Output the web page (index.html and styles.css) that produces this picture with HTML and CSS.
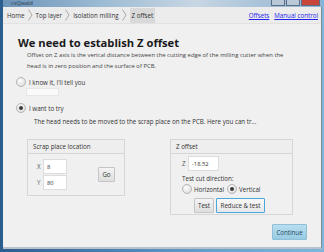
FILE: index.html
```html
<!DOCTYPE html>
<html>
  <head>
    <title>cxQwald</title>
    <link rel="stylesheet" href="styles.css">
  </head>
  <body>
    <div class="frame">
      <div class="titlebar">
        <span class="app-title">cxQwald</span>
        <div class="win-btns">
          <span class="win-btn"></span>
          <span class="win-btn"></span>
          <span class="win-btn close"></span>
        </div>
      </div>

      <div class="client">
        <div class="crumbbar">
          <span class="crumb">Home</span>
          <svg class="chev" width="5" height="12" viewBox="0 0 5 12"><path d="M0.5 0.5 L4 6 L0.5 11.5" fill="none" stroke="#9a9a9a" stroke-width="0.8"/></svg>
          <span class="crumb">Top layer</span>
          <svg class="chev" width="5" height="12" viewBox="0 0 5 12"><path d="M0.5 0.5 L4 6 L0.5 11.5" fill="none" stroke="#9a9a9a" stroke-width="0.8"/></svg>
          <span class="crumb">Isolation milling</span>
          <svg class="chev" width="5" height="12" viewBox="0 0 5 12"><path d="M0.5 0.5 L4 6 L0.5 11.5" fill="none" stroke="#9a9a9a" stroke-width="0.8"/></svg>
          <span class="crumb current">Z offset</span>

          <div class="toplinks">
            <a href="#">Offsets</a>
            <a href="#">Manual control</a>
          </div>
        </div>

        <div class="content">
          <h1>We need to establish Z offset</h1>
          <p class="desc">
            Offset on Z axis is the verical distance between the cutting edge of the milling cutter when the<br>
            head is in zero position and the surface of PCB.
          </p>

          <label class="radio know">
            <span class="dot"></span>
            I know it, I'll tell you
          </label>
          <input class="known-field" type="text">

          <label class="radio try">
            <span class="dot checked"></span>
            I want to try
          </label>
          <p class="try-desc">The head needs to be moved to the scrap place on the PCB. Here you can tr...</p>

          <div class="panels">
            <div class="panel scrap">
              <div class="panel-head">Scrap place location</div>
              <div class="panel-body scrap-body">
                <div class="coords">
                  <div class="coord-row">
                    <span class="axis">X</span>
                    <input class="field" type="text" value="8">
                  </div>
                  <div class="coord-row">
                    <span class="axis">Y</span>
                    <input class="field" type="text" value="80">
                  </div>
                </div>
                <button class="btn go">Go</button>
              </div>
            </div>

            <div class="panel zpanel">
              <div class="panel-head">Z offset</div>
              <div class="panel-body">
                <div class="coord-row">
                  <span class="axis">Z</span>
                  <input class="field zfield" type="text" value="-18.52">
                </div>
                <div class="dir-label">Test cut direction:</div>
                <div class="dir-row">
                  <label class="radio small"><span class="dot"></span>Horizontal</label>
                  <label class="radio small"><span class="dot checked"></span>Vertical</label>
                </div>
                <div class="test-btns">
                  <button class="btn">Test</button>
                  <button class="btn focused">Reduce &amp; test</button>
                </div>
              </div>
            </div>
          </div>

          <div class="footer">
            <button class="btn continue">Continue</button>
          </div>
        </div>
      </div>
    </div>
  </body>
</html>
```

FILE: styles.css
```css
body {
  margin: 0;
  padding: 0;
  font-family: "Open Sans", "DejaVu Sans", sans-serif;
  color: #333;
}

.frame {
  width: 324px;
  height: 252px;
  box-sizing: border-box;
  padding: 0 2px 3px 3px;
  display: flex;
  flex-direction: column;
  background: linear-gradient(90deg, #2c5d8f 0%, #4f86b8 40%, #6aa4cf 70%, #7fb6dd 100%);
  overflow: hidden;
}

.titlebar {
  height: 7px;
  position: relative;
  background: linear-gradient(90deg, #6b93b8, #9bbad3 30%, #c7d6e3 60%, #8fb2d0);
}

.app-title {
  position: absolute;
  left: 8px;
  top: 0;
  font-size: 5.5px;
  line-height: 6px;
  color: #2a3a4a;
}

.win-btns {
  position: absolute;
  right: 2px;
  top: 0;
  display: flex;
  gap: 1px;
}

.win-btn {
  width: 12px;
  height: 5px;
  background: #b9c7d6;
  border: 1px solid #5a6f87;
  border-top: none;
}

.win-btn.close {
  width: 17px;
  background: #c8453a;
}

.client {
  flex: 1;
  display: flex;
  flex-direction: column;
  background-color: #f0f0f0;
  border-right: 1px solid #7e8a96;
  border-bottom: 2px solid #b9c2cc;
}

.crumbbar {
  height: 16px;
  display: flex;
  align-items: center;
  padding: 0 3px 0 3px;
  background-color: #ececec;
  border-bottom: 1px solid #e2e2e2;
  font-size: 6.2px;
}

.crumb {
  padding: 2px 1px;
  color: #333;
}

.crumb.current {
  background-color: #d9d9d9;
  padding: 3px 2px 3px 2px;
  margin-left: 1px;
}

.chev {
  margin: 0 2px;
}

.toplinks {
  margin-left: auto;
  display: flex;
  gap: 5px;
}

.toplinks a {
  color: #2222ee;
  text-decoration: underline;
}

.content {
  flex: 1;
  display: flex;
  flex-direction: column;
  align-items: flex-start;
  padding: 0 0 0 13px;
}

h1 {
  margin: 12px 0 0 2px;
  font-size: 11.2px;
  line-height: 14px;
  font-weight: 700;
  color: #1a1a1a;
}

.desc {
  margin: 0 0 0 11px;
  width: 290px;
  font-size: 5.9px;
  line-height: 11px;
  color: #444;
}

.radio {
  display: flex;
  align-items: center;
  gap: 3px;
  font-size: 6.2px;
  color: #333;
}

.radio.know {
  margin-top: 5px;
}

.dot {
  width: 8px;
  height: 8px;
  border-radius: 50%;
  border: 1px solid #b5b5b5;
  background: radial-gradient(circle at 40% 35%, #fdfdfd, #d6d6d6);
  display: flex;
  align-items: center;
  justify-content: center;
}

.dot.checked::after {
  content: "";
  width: 4px;
  height: 4px;
  border-radius: 50%;
  background-color: #3a3a3a;
}

.known-field {
  margin: 1px 0 0 10px;
  width: 33px;
  height: 8px;
  box-sizing: border-box;
  border: 1px solid #e6e6e6;
  background-color: #fafafa;
  padding: 0;
}

.radio.try {
  margin-top: 7px;
}

.try-desc {
  margin: 4px 0 0 18px;
  font-size: 6.2px;
  color: #333;
}

.panels {
  display: flex;
  align-items: flex-start;
  margin: 13px 0 0 11px;
}

.panel {
  border: 1px solid #d6d6d6;
  background-color: #f0f0f0;
}

.panel-head {
  height: 13px;
  display: flex;
  align-items: center;
  padding-left: 5px;
  font-size: 6.2px;
  color: #333;
  border-bottom: 1px solid #d6d6d6;
  background-color: #eeeeee;
}

.scrap {
  width: 96px;
}

.scrap-body {
  display: flex;
  align-items: center;
  padding: 5px 0 5px 9px;
}

.coords {
  display: flex;
  flex-direction: column;
  gap: 1px;
}

.coord-row {
  display: flex;
  align-items: center;
  gap: 2px;
}

.axis {
  font-size: 6.2px;
  color: #555;
  width: 4px;
}

.field {
  width: 24px;
  height: 15px;
  box-sizing: border-box;
  border: 1px solid #dcdcdc;
  background-color: #fff;
  font-family: "Open Sans", "DejaVu Sans", sans-serif;
  font-size: 5.8px;
  color: #333;
  padding: 0 3px;
}

.btn {
  font-family: "Open Sans", "DejaVu Sans", sans-serif;
  font-size: 6.2px;
  color: #333;
  background: linear-gradient(#f4f4f4, #dedede);
  border: 1px solid #c4c4c4;
  border-radius: 1px;
  padding: 0;
  height: 15px;
}

.go {
  width: 17px;
  margin-left: 31px;
}

.zpanel {
  width: 121px;
  margin-left: 45px;
}

.zpanel .panel-body {
  padding: 2px 0 1px 11px;
}

.zfield {
  width: 31px;
}

.dir-label {
  margin-top: 3px;
  font-size: 6.2px;
  color: #333;
}

.dir-row {
  display: flex;
  gap: 3px;
  margin-top: 1px;
}

.radio.small {
  gap: 2px;
}

.test-btns {
  display: flex;
  gap: 2px;
  margin: 4px 0 0 12px;
}

.test-btns .btn {
  width: 20px;
}

.test-btns .btn.focused {
  width: 49px;
  border-color: #4ba8dc;
  background: linear-gradient(#f8f8f8, #e8e8e8);
}

.footer {
  align-self: stretch;
  display: flex;
  justify-content: flex-end;
  padding-right: 14px;
  margin-top: 9px;
}

.continue {
  width: 35px;
  height: 16px;
  background: linear-gradient(#b8dff0, #98cbe3);
  border-color: #8fc0d8;
  color: #24465a;
}
```
